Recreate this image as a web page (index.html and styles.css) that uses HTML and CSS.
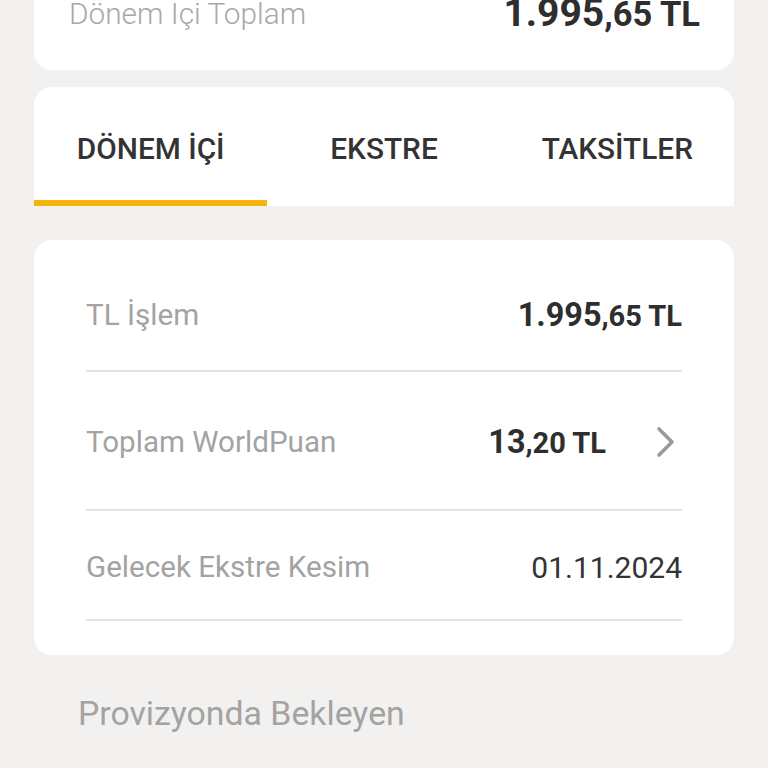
FILE: index.html
```html
<!DOCTYPE html>
<html lang="tr">
<head>
<meta charset="utf-8">
<link rel="stylesheet" href="styles.css">
</head>
<body>
<div class="page">
  <section class="card summary">
    <span class="summary-label">Dönem Içi Toplam</span>
    <span class="amount amount-lg"><span class="int">1.995</span><span class="dec">,65 TL</span></span>
  </section>

  <nav class="tabs">
    <div class="tab active">DÖNEM İÇİ</div>
    <div class="tab">EKSTRE</div>
    <div class="tab">TAKSİTLER</div>
  </nav>

  <section class="card details">
    <div class="row row-1">
      <span class="label">TL İşlem</span>
      <span class="amount"><span class="int">1.995</span><span class="dec">,65 TL</span></span>
    </div>
    <div class="row row-2">
      <span class="label">Toplam WorldPuan</span>
      <span class="value-group">
        <span class="amount"><span class="int">13</span><span class="dec">,20 TL</span></span>
        <svg class="chevron" width="20" height="32" viewBox="0 0 20 32"><path d="M3 3 L16 16 L3 29" fill="none" stroke="#9a9a9a" stroke-width="3.6" stroke-linecap="round" stroke-linejoin="round"/></svg>
      </span>
    </div>
    <div class="row row-3">
      <span class="label">Gelecek Ekstre Kesim</span>
      <span class="date">01.11.2024</span>
    </div>
  </section>

  <h2 class="section-title">Provizyonda Bekleyen</h2>
</div>
</body>
</html>
```

FILE: styles.css
```css
html, body {
  margin: 0;
  padding: 0;
  background: #f2f1ef;
}
body {
  font-family: Roboto, "Noto Sans", "Liberation Sans", sans-serif;
  color: #333;
}
.page {
  width: 700px;
  margin-left: 34px;
  display: flex;
  flex-direction: column;
}
.card {
  background: #fff;
  border-radius: 18px;
}
.summary {
  margin-top: -40px;
  height: 110px;
  padding: 34px 34px 0 35px;
  box-sizing: border-box;
  display: flex;
  justify-content: space-between;
  align-items: flex-start;
  border-radius: 0 0 18px 18px;
}
.summary-label {
  font-size: 29.8px;
  font-weight: 300;
  color: #a8a8a8;
  line-height: 40px;
}
.amount {
  font-weight: 700;
  color: #2e2e2e;
  white-space: nowrap;
}
.amount .int { font-size: 32.4px; }
.amount .dec { font-size: 29px; }
.amount-lg { line-height: 40px; margin-top: -1px; }
.amount-lg .int { font-size: 39px; }
.amount-lg .dec { font-size: 34.5px; }

.tabs {
  margin-top: 17px;
  height: 119px;
  background: #fff;
  border-radius: 18px 18px 0 0;
  display: grid;
  grid-template-columns: 1fr 1fr 1fr;
}
.tab {
  display: flex;
  align-items: center;
  justify-content: center;
  padding-top: 10px;
  font-size: 29.8px;
  font-weight: 500;
  color: #333;
  border-bottom: 6px solid transparent;
}
.tab.active {
  border-bottom-color: #f6b40a;
}

.details {
  margin-top: 34px;
  padding: 0 52px 34px;
}
.row {
  display: flex;
  justify-content: space-between;
  align-items: center;
  height: 40px;
  border-bottom: 2px solid #e3e3e3;
}
.row-1 { padding: 55px 0 35px; }
.row-2 { padding: 50px 0 47px; }
.row-3 { padding: 36px 0 32px; }
.label {
  font-size: 29.6px;
  color: #a3a3a3;
}
.value-group {
  display: flex;
  align-items: center;
  gap: 50px;
}
.chevron {
  margin-right: 6px;
}
.date {
  font-size: 30px;
  color: #333;
}
.section-title {
  margin: 39px 0 0 44px;
  font-size: 33.8px;
  font-weight: 400;
  color: #a3a3a3;
}
```
